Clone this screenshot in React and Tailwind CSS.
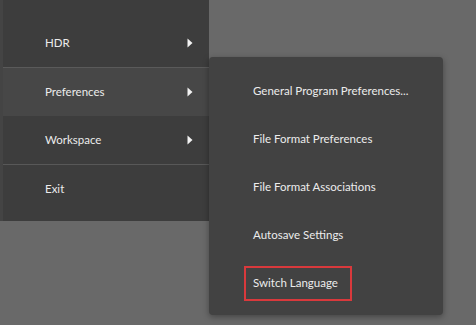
import React from 'react';

const font = { fontFamily: 'Lato, "Open Sans", Arial, sans-serif' };

function Arrow() {
  return (
    <svg width="6" height="10" viewBox="0 0 6 10" className="shrink-0">
      <path d="M0.5 0.5 L5.5 5 L0.5 9.5 Z" fill="#f2f2f2" />
    </svg>
  );
}

function LeftRow({ label, arrow, active }) {
  return (
    <div className={`h-[48px] flex items-center justify-between pl-[42px] pr-[16px] ${active ? 'bg-[#474747]' : ''}`}>
      <span className="text-[11.5px] text-[#ececec]">{label}</span>
      {arrow && <Arrow />}
    </div>
  );
}

const subItems = [
  'General Program Preferences...',
  'File Format Preferences',
  'File Format Associations',
  'Autosave Settings',
];

export default function App() {
  return (
    <div className="w-[476px] h-[325px] bg-[#696969] overflow-hidden flex items-start" style={font}>
      <div className="w-[209px] shrink-0 bg-[#3d3d3d] pt-[19px] pb-[8px] border-l-[3px] border-[#444]">
        <LeftRow label="HDR" arrow />
        <div className="h-px bg-[#5a5a5a]" />
        <LeftRow label="Preferences" arrow active />
        <LeftRow label="Workspace" arrow />
        <div className="h-px bg-[#585858]" />
        <LeftRow label="Exit" />
      </div>
      <div className="mt-[57px] w-[234px] shrink-0 bg-[#424242] rounded-[4px] pt-[10px] pb-[8px] shadow-[0_2px_6px_rgba(0,0,0,0.35)]">
        {subItems.map((s) => (
          <div key={s} className="h-[48px] flex items-center pl-[44px]">
            <span className="text-[11.5px] text-[#ececec]">{s}</span>
          </div>
        ))}
        <div className="h-[48px] flex items-center pl-[35px]">
          <span className="h-[35px] flex items-center border-2 border-[#d9393c] pl-[7px] pr-[12px] text-[11.5px] text-[#ececec]">
            Switch Language
          </span>
        </div>
      </div>
    </div>
  );
}
